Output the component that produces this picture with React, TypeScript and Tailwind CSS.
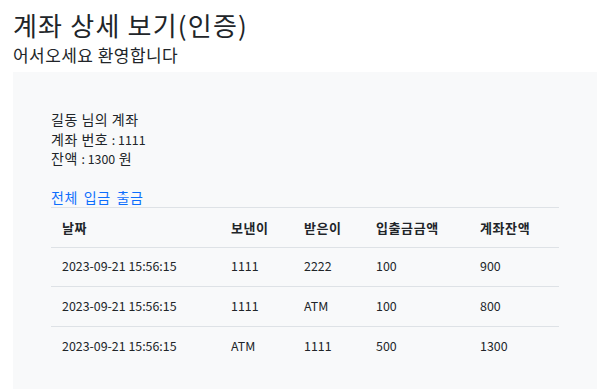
const rows = [
  { date: '2023-09-21 15:56:15', from: '1111', to: '2222', amount: '100', balance: '900' },
  { date: '2023-09-21 15:56:15', from: '1111', to: 'ATM', amount: '100', balance: '800' },
  { date: '2023-09-21 15:56:15', from: 'ATM', to: '1111', amount: '500', balance: '1300' },
];

export default function App() {
  return (
    <div
      className="min-h-screen bg-white text-[#212529] pl-[13px] pr-[17px] pt-[8px]"
      style={{ fontFamily: '"Noto Sans CJK KR", "Noto Sans", sans-serif' }}
    >
      <h1 className="text-[26px] leading-[34px] tracking-[1.2px] font-normal">계좌 상세 보기(인증)</h1>
      <p className="text-[17px] leading-[24px] tracking-[0.45px] mt-[1px] mb-[5px]">어서오세요 환영합니다</p>

      <div className="bg-[#f8f9fa] px-[38px] pt-[38px] pb-[40px]">
        <div className="text-[14px] leading-[19.5px] tracking-[0.5px]">
          <div>길동 님의 계좌</div>
          <div className="h-[19.5px]">
            계좌 번호 <span className="text-[12.4px] leading-none tracking-normal">: 1111</span>
          </div>
          <div className="h-[19.5px]">
            잔액 <span className="text-[12.4px] leading-none tracking-normal">: 1300</span> 원
          </div>
        </div>

        <div className="mt-[19px] flex gap-[6px] text-[14px] leading-[19.5px] tracking-[0.5px] text-[#0d6efd]">
          <a href="#">전체</a>
          <a href="#">입금</a>
          <a href="#">출금</a>
        </div>

        <table className="w-full border-collapse text-[12.4px] border-t border-[#dee2e6]">
          <thead>
            <tr className="border-b border-[#dee2e6] text-[13px] tracking-[0.6px]">
              <th className="w-[169px] h-[39.5px] px-[11px] text-left font-bold">날짜</th>
              <th className="w-[73px] px-[11px] text-left font-bold">보낸이</th>
              <th className="w-[72px] px-[11px] text-left font-bold">받은이</th>
              <th className="w-[104px] px-[11px] text-left font-bold">입출금금액</th>
              <th className="px-[11px] text-left font-bold">계좌잔액</th>
            </tr>
          </thead>
          <tbody>
            {rows.map((r, i) => (
              <tr key={i} className={i < rows.length - 1 ? 'border-b border-[#dee2e6]' : ''}>
                <td className="h-[39.5px] px-[11px]">{r.date}</td>
                <td className="px-[11px]">{r.from}</td>
                <td className="px-[11px]">{r.to}</td>
                <td className="px-[11px]">{r.amount}</td>
                <td className="px-[11px]">{r.balance}</td>
              </tr>
            ))}
          </tbody>
        </table>
      </div>
    </div>
  );
}
